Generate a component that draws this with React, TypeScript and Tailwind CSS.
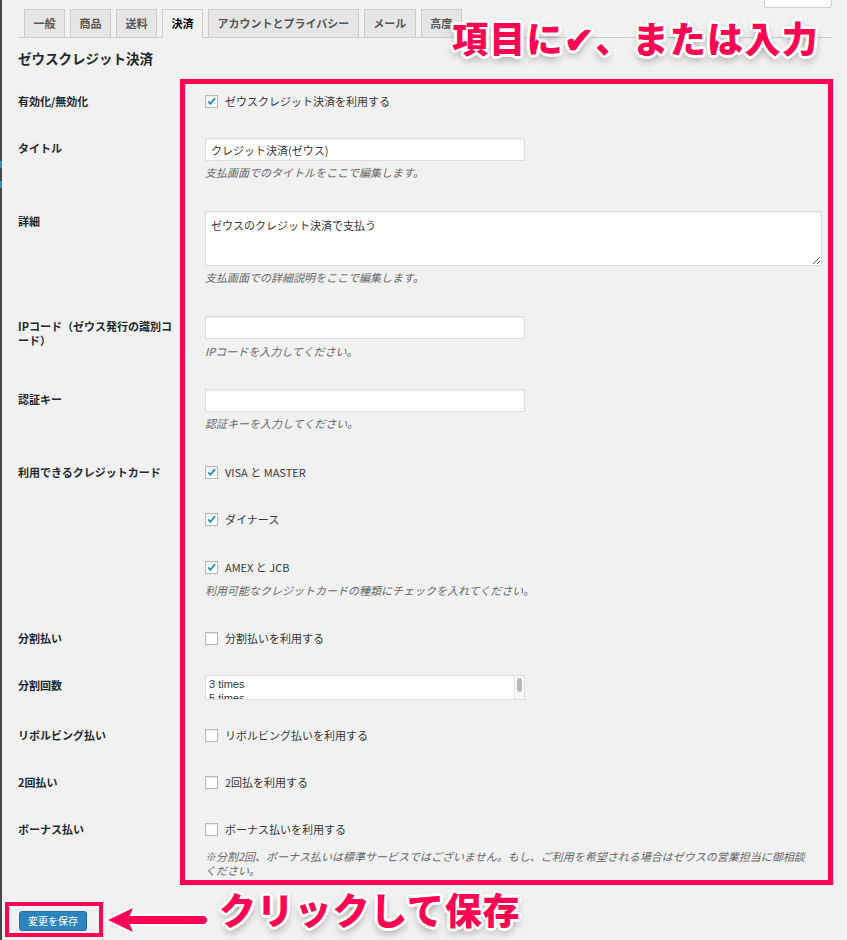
import React from "react";

function Checkbox({ checked }: { checked?: boolean }) {
  return (
    <span className="flex h-[13px] w-[13px] shrink-0 items-center justify-center border border-[#b4b9be] bg-white shadow-[inset_0_1px_2px_rgba(0,0,0,0.1)]">
      {checked && (
        <svg viewBox="0 0 13 13" className="h-[13px] w-[13px]">
          <path d="M2.6 6.4 L5.3 9.2 L10.6 2.6" fill="none" stroke="#1e8cbe" strokeWidth="2.2" strokeLinejoin="round" />
        </svg>
      )}
    </span>
  );
}

function CheckLine({ checked, children }: { checked?: boolean; children: React.ReactNode }) {
  return (
    <div className="flex h-[20px] items-center gap-[7px] text-[11px] text-[#32373c]">
      <Checkbox checked={checked} />
      <span>{children}</span>
    </div>
  );
}

function Label({ children }: { children: React.ReactNode }) {
  return (
    <div className="w-[187px] shrink-0 pr-[27px] pt-[3px] text-[11px] font-bold leading-[14px] text-[#23282d]">
      {children}
    </div>
  );
}

function Desc({ children, className = "" }: { children: React.ReactNode; className?: string }) {
  return <p className={"text-[11px] italic leading-[16px] text-[#666] " + className}>{children}</p>;
}

function TextInput({ value = "" }: { value?: string }) {
  return (
    <input
      readOnly
      value={value}
      className="block h-[23px] w-[320px] border border-[#ddd] bg-white px-[5px] text-[11px] text-[#32373c] shadow-[inset_0_1px_2px_rgba(0,0,0,0.07)] outline-none"
    />
  );
}

const tabs = ["一般", "商品", "送料", "決済", "アカウントとプライバシー", "メール", "高度"];

const outline =
  "[text-shadow:3px_0_0_#fff,-3px_0_0_#fff,0_3px_0_#fff,0_-3px_0_#fff,2px_2px_0_#fff,-2px_-2px_0_#fff,2px_-2px_0_#fff,-2px_2px_0_#fff,0_4px_8px_rgba(0,0,0,0.45)]";

export default function App() {
  return (
    <div className="relative flex h-[940px] w-[847px] overflow-hidden bg-[#f1f1f1] font-['Noto_Sans_CJK_JP',sans-serif]">
      {/* left admin edge */}
      <div className="flex w-[2px] shrink-0 flex-col bg-[#464646]">
        <div className="h-[161px]" />
        <div className="h-[7px] bg-[#2e8ccb]" />
        <div className="h-[13px]" />
        <div className="h-[7px] bg-[#2e8ccb]" />
      </div>

      <main className="flex-1 pl-[16px] pr-[15px]">
        {/* top-right cut button */}
        <div className="flex justify-end">
          <div className="h-[8px] w-[68px] rounded-b-[3px] border border-t-0 border-[#ccc] bg-white" />
        </div>

        {/* tabs */}
        <div className="mt-[1px] flex gap-[5px] border-b border-[#ccc] pl-[6px]">
          {tabs.map((t) => {
            const active = t === "決済";
            return (
              <div
                key={t}
                className={
                  "-mb-px flex h-[29px] items-center border px-[8.5px] text-[11px] font-bold " +
                  (active
                    ? "border-[#ccc] border-b-[#f1f1f1] bg-[#f1f1f1] text-black"
                    : "border-[#ccc] bg-[#e5e5e5] text-[#555]")
                }
              >
                {t}
              </div>
            );
          })}
        </div>

        <h2 className="mt-[10px] h-[20px] text-[13.5px] font-bold leading-[20px] text-[#23282d]">ゼウスクレジット決済</h2>

        {/* Row A */}
        <div className="mt-[23px] flex">
          <Label>有効化/無効化</Label>
          <div>
            <CheckLine checked>ゼウスクレジット決済を利用する</CheckLine>
          </div>
        </div>

        {/* Row B */}
        <div className="mt-[27px] flex">
          <Label>タイトル</Label>
          <div>
            <TextInput value="クレジット決済(ゼウス)" />
            <Desc className="mt-[3px]">支払画面でのタイトルをここで編集します。</Desc>
          </div>
        </div>

        {/* Row C */}
        <div className="mt-[31px] flex">
          <Label>詳細</Label>
          <div>
            <textarea
              readOnly
              value="ゼウスのクレジット決済で支払う"
              className="block h-[55px] w-[617px] border border-[#ddd] bg-white px-[5px] pt-[5px] text-[11px] leading-[16px] text-[#32373c] shadow-[inset_0_1px_2px_rgba(0,0,0,0.07)] outline-none"
            />
            <Desc className="mt-[3px]">支払画面での詳細説明をここで編集します。</Desc>
          </div>
        </div>

        {/* Row D */}
        <div className="mt-[31px] flex">
          <Label>IPコード（ゼウス発行の識別コード）</Label>
          <div>
            <TextInput />
            <Desc className="mt-[4px]">IPコードを入力してください。</Desc>
          </div>
        </div>

        {/* Row E */}
        <div className="mt-[30px] flex">
          <Label>認証キー</Label>
          <div>
            <TextInput />
            <Desc className="mt-[3px]">認証キーを入力してください。</Desc>
          </div>
        </div>

        {/* Row F */}
        <div className="mt-[31px] flex">
          <Label>利用できるクレジットカード</Label>
          <div>
            <CheckLine checked>VISA と MASTER</CheckLine>
            <div className="mt-[27px]">
              <CheckLine checked>ダイナース</CheckLine>
            </div>
            <div className="mt-[28px]">
              <CheckLine checked>AMEX と JCB</CheckLine>
            </div>
            <Desc className="mt-[5px]">利用可能なクレジットカードの種類にチェックを入れてください。</Desc>
          </div>
        </div>

        {/* Row G */}
        <div className="mt-[30px] flex">
          <Label>分割払い</Label>
          <div>
            <CheckLine>分割払いを利用する</CheckLine>
          </div>
        </div>

        {/* Row H */}
        <div className="mt-[27px] flex">
          <Label>分割回数</Label>
          <div className="flex h-[25px] w-[320px] overflow-hidden border border-[#ddd] bg-white">
            <div className="flex-1 pl-[3px] pt-[1px] font-['Liberation_Sans',sans-serif] text-[11px] leading-[14px] text-[#32373c]">
              <div>3 times</div>
              <div>5 times</div>
            </div>
            <div className="w-[10px] border-l border-[#e5e5e5] bg-[#fafafa] pl-[2px] pt-[2px]">
              <div className="h-[14px] w-[5px] rounded-[3px] bg-[#b8b8b8]" />
            </div>
          </div>
        </div>

        {/* Row I */}
        <div className="mt-[25px] flex">
          <Label>リボルビング払い</Label>
          <div>
            <CheckLine>リボルビング払いを利用する</CheckLine>
          </div>
        </div>

        {/* Row J */}
        <div className="mt-[27px] flex">
          <Label>2回払い</Label>
          <div>
            <CheckLine>2回払を利用する</CheckLine>
          </div>
        </div>

        {/* Row K */}
        <div className="mt-[27px] flex">
          <Label>ボーナス払い</Label>
          <div>
            <CheckLine>ボーナス払いを利用する</CheckLine>
            <p className="mt-[10px] w-[610px] text-[11px] italic leading-[14px] text-[#666]">
              ※分割2回、ボーナス払いは標準サービスではございません。もし、ご利用を希望される場合はゼウスの営業担当に御相談ください。
            </p>
          </div>
        </div>

        <button className="ml-[1px] mt-[34px] h-[20px] rounded-[3px] border border-[#1f6fa3] bg-[#2b84c0] px-[8px] text-[10px] leading-[18px] text-white">
          変更を保存
        </button>
      </main>

      {/* annotations */}
      <div className="absolute left-[180px] top-[79px] h-[806px] w-[653px] border-[5px] border-[#fe0553]" />
      <div className="absolute left-[5px] top-[902px] h-[35px] w-[98px] border-4 border-[#fe0553]" />

      <div
        className={
          "absolute left-[452px] top-[17px] whitespace-nowrap text-[36px] font-black leading-[40px] tracking-[1.3px] text-[#fe0553] " +
          outline
        }
      >
        項目に✔、または入力
      </div>
      <div
        className={
          "absolute left-[219px] top-[888px] whitespace-nowrap text-[37px] font-black leading-[42px] tracking-[0.8px] text-[#fe0553] " +
          outline
        }
      >
        クリックして保存
      </div>

      <svg className="absolute left-[105px] top-[905px]" width="104" height="30" viewBox="0 0 104 30">
        <line x1="22" y1="15" x2="98" y2="15" stroke="#fff" strokeWidth="12" strokeLinecap="round" />
        <polygon points="1,15 29,1 24,15 29,29" fill="#fff" stroke="#fff" strokeWidth="3" strokeLinejoin="round" />
        <line x1="22" y1="15" x2="98" y2="15" stroke="#fe0553" strokeWidth="8" strokeLinecap="round" />
        <polygon points="3,15 28,3 23,15 28,27" fill="#fe0553" />
      </svg>
    </div>
  );
}
